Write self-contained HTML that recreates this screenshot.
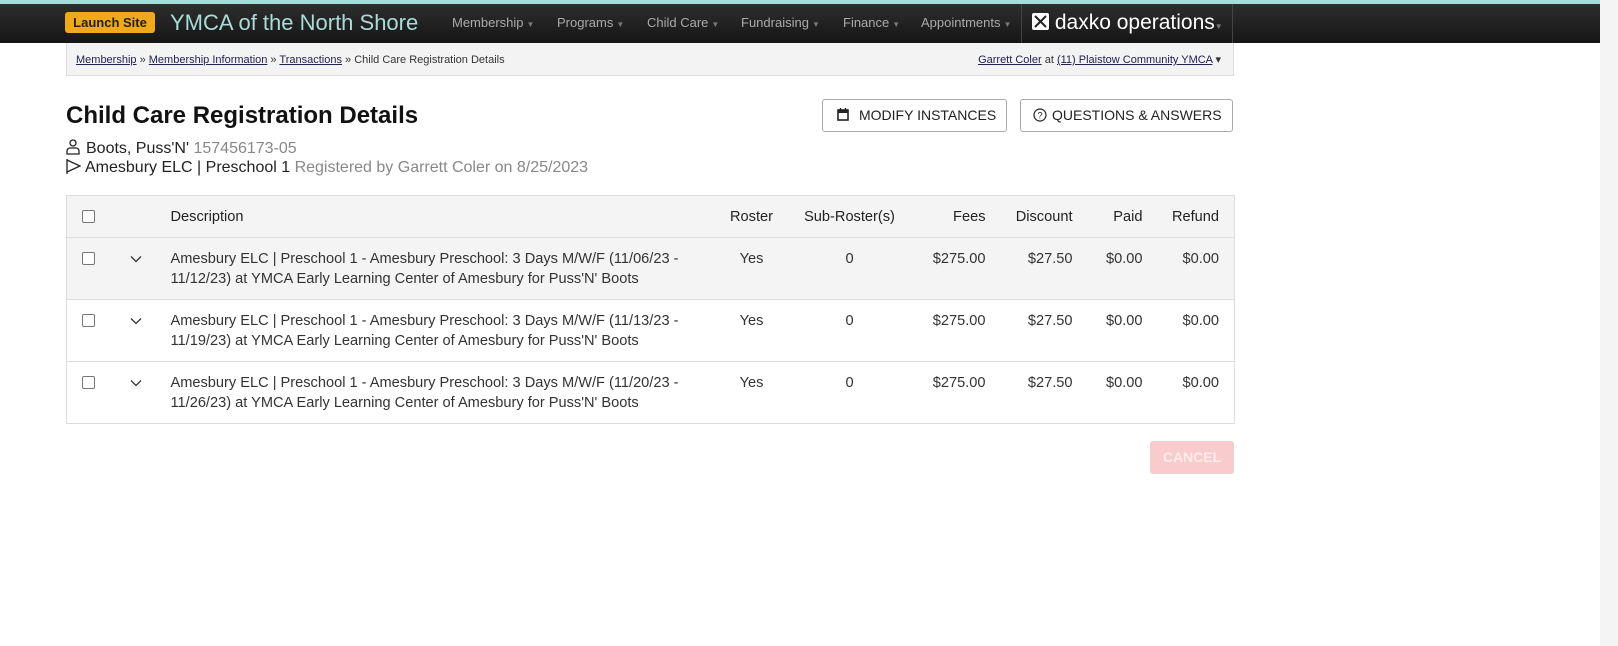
<!DOCTYPE html>
<html><head><style>
*{box-sizing:border-box;margin:0;padding:0}
body{width:1618px;height:646px;background:#fff;font-family:"Liberation Sans",sans-serif;position:relative;overflow:hidden;color:#222}
.top{position:absolute;left:0;top:0;width:1600px;height:4px;background:#a8dcd9}
.nav{position:absolute;left:0;top:4px;width:1600px;height:39px;background:linear-gradient(#2e2e2e,#151515)}
.launch{position:absolute;left:65px;top:12px;width:90px;height:21px;background:#f0a81c;border-radius:3px;font-size:13px;font-weight:bold;color:#222;text-align:center;line-height:21px}
.brand{position:absolute;left:170px;top:10px;font-size:22px;color:#a9dcd8}
.menu{position:absolute;top:15px;font-size:13px;color:#aaa}
.menu span{font-size:8px;color:#777;margin-left:3px}
.daxko{position:absolute;left:1021px;top:4px;width:212px;height:39px;border-left:1px solid #444;border-right:1px solid #444;color:#fff;font-size:21px;padding:7px 0 0 10px}
.bc{position:absolute;left:66px;top:43px;width:1168px;height:33px;background:#f3f3f3;border:1px solid #ddd;border-top:none;font-size:11px;color:#333;padding:11px 9px}
.bc a{color:#225;text-decoration:underline}
.bc .r{position:absolute;right:12px;top:10px}
h1{position:absolute;left:66px;top:102px;font-size:24px;font-weight:bold;color:#111}
.btn{position:absolute;top:99px;height:33px;border:1px solid #aaa;border-radius:3px;font-size:14px;color:#222;line-height:31px;background:#fff}
.l1{position:absolute;left:66px;top:139px;font-size:16px}
.l2{position:absolute;left:66px;top:159px;font-size:16px}
.g{color:#888}
table{position:absolute;left:66px;top:195px;width:1168px;border-collapse:collapse;border:1px solid #ddd;font-size:14.6px;table-layout:fixed}
td,th{border-top:1px solid #ddd;padding:0}
th{height:42px;background:#f4f4f4;font-weight:normal;color:#222;text-align:left}
td{height:62px;vertical-align:top;padding-top:11px;color:#333;line-height:20px}
tr.sh td{background:#f4f4f4}
.cb{display:inline-block;width:13px;height:13px;border:1px solid #777;border-radius:2px;background:#fff;margin-left:15px;margin-top:3px}
th .cb{margin-top:0}
.rt{text-align:right}.ct{text-align:center}
.cancel{position:absolute;left:1150px;top:441px;width:84px;height:33px;background:#f8cccc;border-radius:3px;color:#fdeaea;font-weight:bold;font-size:14px;text-align:center;line-height:33px}
.sb{position:absolute;left:1600px;top:0;width:18px;height:646px;background:#f4f4f4}
</style></head><body>
<div class="top"></div>
<div class="nav"></div>
<div class="launch">Launch Site</div>
<div class="brand">YMCA of the North Shore</div>
<div class="menu" style="left:452px">Membership<span>▼</span></div>
<div class="menu" style="left:557px">Programs<span>▼</span></div>
<div class="menu" style="left:647px">Child Care<span>▼</span></div>
<div class="menu" style="left:741px">Fundraising<span>▼</span></div>
<div class="menu" style="left:843px">Finance<span>▼</span></div>
<div class="menu" style="left:921px">Appointments<span>▼</span></div>
<div class="daxko"><svg width="17" height="17" viewBox="0 0 17 17" style="vertical-align:-1px"><rect width="17" height="17" rx="2" fill="#fff"/><path d="M3 3L14 14M14 3L3 14" stroke="#222" stroke-width="2"/></svg> daxko operations<span style="font-size:8px;color:#777">▼</span></div>
<div class="bc"><a>Membership</a> » <a>Membership Information</a> » <a>Transactions</a> » Child Care Registration Details<span class="r"><a>Garrett Coler</a> at <a>(11) Plaistow Community YMCA</a> ▾</span></div>
<h1>Child Care Registration Details</h1>
<div class="btn" style="left:822px;width:185px;padding-left:14px"><svg width="12" height="13" viewBox="0 0 12 13" style="vertical-align:-1px;margin-right:10px"><rect x="1" y="2" width="10" height="10" fill="none" stroke="#222" stroke-width="1.6"/><rect x="1" y="2" width="10" height="3" fill="#222"/><path d="M3.5 0v3M8.5 0v3" stroke="#222" stroke-width="1.4"/></svg>MODIFY INSTANCES</div>
<div class="btn" style="left:1020px;width:213px;padding-left:12px"><svg width="14" height="14" viewBox="0 0 14 14" style="vertical-align:-2px;margin-right:5px"><circle cx="7" cy="7" r="6" fill="none" stroke="#222" stroke-width="1.2"/><text x="7" y="10.5" font-size="9" text-anchor="middle" fill="#222" font-family="Liberation Sans">?</text></svg>QUESTIONS &amp; ANSWERS</div>
<div class="l1"><svg width="14" height="16" viewBox="0 0 14 16" style="vertical-align:-2px;margin-right:6px"><circle cx="7" cy="4" r="3" fill="none" stroke="#222" stroke-width="1.3"/><path d="M1 15v-3a3 3 0 0 1 3-3h6a3 3 0 0 1 3 3v3z" fill="none" stroke="#222" stroke-width="1.3"/></svg>Boots, Puss'N' <span class="g">157456173-05</span></div>
<div class="l2"><svg width="15" height="15" viewBox="0 0 15 15" style="vertical-align:-2px;margin-right:4px"><path d="M1 0v15M1 1l13 6L1 13" fill="none" stroke="#222" stroke-width="1.3"/></svg>Amesbury ELC | Preschool 1 <span class="g">Registered by Garrett Coler on 8/25/2023</span></div>
<table>
<colgroup><col style="width:44px"><col style="width:60px"><col style="width:546px"><col style="width:70px"><col style="width:126px"><col style="width:73px"><col style="width:87px"><col style="width:70px"><col style="width:92px"></colgroup>
<tr><th><span class="cb" style="vertical-align:middle"></span></th><th></th><th>Description</th><th class="ct">Roster</th><th class="ct">Sub-Roster(s)</th><th class="rt">Fees</th><th class="rt">Discount</th><th class="rt">Paid</th><th class="rt" style="padding-right:15px">Refund</th></tr>
<tr class="sh"><td><span class="cb"></span></td><td style="padding-left:19px"><svg width="12" height="8" viewBox="0 0 12 8"><path d="M1 1.5l5 5 5-5" fill="none" stroke="#333" stroke-width="1.3"/></svg></td><td>Amesbury ELC | Preschool 1 - Amesbury Preschool: 3 Days M/W/F (11/06/23 -<br>11/12/23) at YMCA Early Learning Center of Amesbury for Puss'N' Boots</td><td class="ct">Yes</td><td class="ct">0</td><td class="rt">$275.00</td><td class="rt">$27.50</td><td class="rt">$0.00</td><td class="rt" style="padding-right:15px">$0.00</td></tr>
<tr><td><span class="cb"></span></td><td style="padding-left:19px"><svg width="12" height="8" viewBox="0 0 12 8"><path d="M1 1.5l5 5 5-5" fill="none" stroke="#333" stroke-width="1.3"/></svg></td><td>Amesbury ELC | Preschool 1 - Amesbury Preschool: 3 Days M/W/F (11/13/23 -<br>11/19/23) at YMCA Early Learning Center of Amesbury for Puss'N' Boots</td><td class="ct">Yes</td><td class="ct">0</td><td class="rt">$275.00</td><td class="rt">$27.50</td><td class="rt">$0.00</td><td class="rt" style="padding-right:15px">$0.00</td></tr>
<tr><td><span class="cb"></span></td><td style="padding-left:19px"><svg width="12" height="8" viewBox="0 0 12 8"><path d="M1 1.5l5 5 5-5" fill="none" stroke="#333" stroke-width="1.3"/></svg></td><td>Amesbury ELC | Preschool 1 - Amesbury Preschool: 3 Days M/W/F (11/20/23 -<br>11/26/23) at YMCA Early Learning Center of Amesbury for Puss'N' Boots</td><td class="ct">Yes</td><td class="ct">0</td><td class="rt">$275.00</td><td class="rt">$27.50</td><td class="rt">$0.00</td><td class="rt" style="padding-right:15px">$0.00</td></tr>
</table>
<div class="cancel">CANCEL</div>
<div class="sb"></div>
</body></html>
